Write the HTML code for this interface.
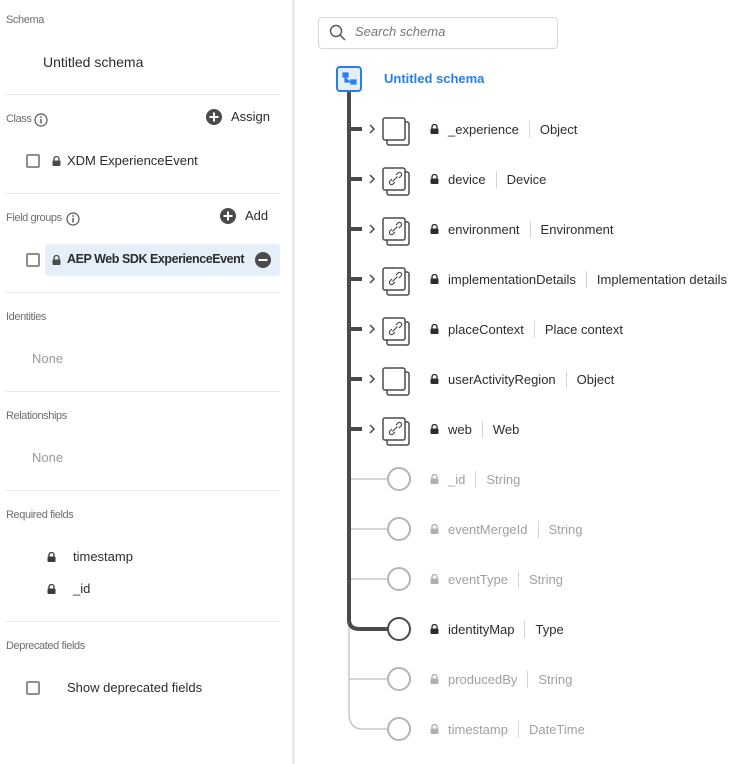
<!DOCTYPE html>
<html><head><meta charset="utf-8"><style>
*{margin:0;padding:0;box-sizing:border-box}
body{width:746px;height:764px;background:#fff;font-family:"Liberation Sans",sans-serif;position:relative;overflow:hidden;color:#2c2c2c}
.a{position:absolute;white-space:nowrap}
.lbl{font-size:11px;color:#6e6e6e;letter-spacing:-0.4px}
.hr{position:absolute;left:6px;width:274px;height:1px;background:#e6e6e6}
.cb{position:absolute;width:14px;height:14px;border:2px solid #8e8e8e;border-radius:2px;background:#fff}
.t{font-size:13px}
.row{position:absolute;left:430px;display:flex;align-items:center;font-size:13px;color:#2c2c2c;height:20px}
.row .s{width:1px;height:17px;background:#d5d5d5;margin:0 10px}
.row.l{color:#a0a0a0}
.row svg{margin-right:9px}
</style></head><body>
<div style="position:absolute;left:292px;top:0;width:3px;height:764px;background:#ececec"></div>

<div class="a lbl" style="left:6px;top:14px">Schema</div>
<div class="a" style="left:43px;top:54px;font-size:14px">Untitled schema</div>
<div class="hr" style="top:94px"></div>

<div class="a lbl" style="left:6px;top:113px">Class</div>
<svg class="a" style="left:34px;top:113px" width="14" height="14"><circle cx="7" cy="7" r="6" fill="none" stroke="#555" stroke-width="1.2"/><rect x="6.3" y="6" width="1.4" height="4.5" fill="#555"/><circle cx="7" cy="4" r=".9" fill="#555"/></svg>
<svg class="a" style="left:206px;top:109px" width="16" height="16"><circle cx="8" cy="8" r="8" fill="#4b4b4b"/><rect x="7" y="3.5" width="2" height="9" fill="#fff"/><rect x="3.5" y="7" width="9" height="2" fill="#fff"/></svg>
<div class="a t" style="left:231px;top:109px">Assign</div>
<div class="cb" style="left:26px;top:154px"></div>
<svg class="a" style="left:52px;top:156px" width="9" height="10"><path d="M2 4.5V3a2.5 2.5 0 0 1 5 0v1.5" fill="none" stroke="#4b4b4b" stroke-width="1.3"/><rect x="0.5" y="4.5" width="8" height="5.5" rx="1" fill="#4b4b4b"/></svg>
<div class="a t" style="left:67px;top:153px">XDM ExperienceEvent</div>
<div class="hr" style="top:193px"></div>

<div class="a lbl" style="left:6px;top:212px">Field groups</div>
<svg class="a" style="left:66px;top:212px" width="14" height="14"><circle cx="7" cy="7" r="6" fill="none" stroke="#555" stroke-width="1.2"/><rect x="6.3" y="6" width="1.4" height="4.5" fill="#555"/><circle cx="7" cy="4" r=".9" fill="#555"/></svg>
<svg class="a" style="left:220px;top:208px" width="16" height="16"><circle cx="8" cy="8" r="8" fill="#4b4b4b"/><rect x="7" y="3.5" width="2" height="9" fill="#fff"/><rect x="3.5" y="7" width="9" height="2" fill="#fff"/></svg>
<div class="a t" style="left:245px;top:208px">Add</div>
<div class="cb" style="left:26px;top:253px"></div>
<div class="a" style="left:45px;top:244px;width:235px;height:32px;background:#e5effa;border-radius:3px"></div>
<svg class="a" style="left:52px;top:255px" width="9" height="10"><path d="M2 4.5V3a2.5 2.5 0 0 1 5 0v1.5" fill="none" stroke="#4b4b4b" stroke-width="1.3"/><rect x="0.5" y="4.5" width="8" height="5.5" rx="1" fill="#4b4b4b"/></svg>
<div class="a" style="left:67px;top:252px;font-size:12.5px;font-weight:bold;letter-spacing:-0.45px">AEP Web SDK ExperienceEvent</div>
<svg class="a" style="left:255px;top:252px" width="16" height="16"><circle cx="8" cy="8" r="8" fill="#4b4b4b"/><rect x="3.5" y="7" width="9" height="2" fill="#fff"/></svg>
<div class="hr" style="top:292px"></div>

<div class="a lbl" style="left:6px;top:311px">Identities</div>
<div class="a t" style="left:32px;top:351px;color:#9a9a9a">None</div>
<div class="hr" style="top:391px"></div>
<div class="a lbl" style="left:6px;top:410px">Relationships</div>
<div class="a t" style="left:32px;top:450px;color:#9a9a9a">None</div>
<div class="hr" style="top:490px"></div>
<div class="a lbl" style="left:6px;top:509px">Required fields</div>
<svg class="a" style="left:47px;top:552px" width="9" height="10"><path d="M2 4.5V3a2.5 2.5 0 0 1 5 0v1.5" fill="none" stroke="#3a3a3a" stroke-width="1.3"/><rect x="0.5" y="4.5" width="8" height="5.5" rx="1" fill="#3a3a3a"/></svg>
<div class="a t" style="left:73px;top:549px">timestamp</div>
<svg class="a" style="left:47px;top:584px" width="9" height="10"><path d="M2 4.5V3a2.5 2.5 0 0 1 5 0v1.5" fill="none" stroke="#3a3a3a" stroke-width="1.3"/><rect x="0.5" y="4.5" width="8" height="5.5" rx="1" fill="#3a3a3a"/></svg>
<div class="a t" style="left:73px;top:581px">_id</div>
<div class="hr" style="top:621px"></div>
<div class="a lbl" style="left:6px;top:640px">Deprecated fields</div>
<div class="cb" style="left:26px;top:681px"></div>
<div class="a t" style="left:67px;top:680px">Show deprecated fields</div>

<div class="a" style="left:318px;top:17px;width:240px;height:32px;border:1px solid #d8d8d8;border-radius:4px"></div>
<svg class="a" style="left:329px;top:24px" width="18" height="18"><circle cx="7" cy="7" r="5.5" fill="none" stroke="#555" stroke-width="1.4"/><path d="M11 11l5 5" stroke="#555" stroke-width="1.5"/></svg>
<div class="a" style="left:355px;top:24px;font-size:13px;font-style:italic;color:#777">Search schema</div>

<svg class="a" style="left:0;top:0" width="746" height="764">
<g fill="none">
<path d="M349 712 Q349 729 362 729 H388" stroke="#c8c8c8" stroke-width="1.5"/>
<path d="M349 620 V712" stroke="#c8c8c8" stroke-width="1.5"/>
<path d="M349 479H388M349 529H388M349 579H388M349 679H388" stroke="#c8c8c8" stroke-width="1.5"/>
<path d="M349 92 V620 Q349 629 360 629 H388" stroke="#4b4b4b" stroke-width="4"/>
<path d="M349 129h13M349 179h13M349 229h13M349 279h13M349 329h13M349 379h13M349 429h13" stroke="#4b4b4b" stroke-width="4"/>
</g>
<g fill="none" stroke="#4b4b4b" stroke-width="1.5">
<path d="M370 125l4 4-4 4M370 175l4 4-4 4M370 225l4 4-4 4M370 275l4 4-4 4M370 325l4 4-4 4M370 375l4 4-4 4M370 425l4 4-4 4"/>
</g>
<rect x="337" y="67" width="24" height="24" rx="3" fill="#e5effa" stroke="#2680eb" stroke-width="2"/>
<path d="M343 73h5v4h-5zM351 80h5v4h-5zM345 77v5h6" fill="#2680eb" stroke="#2680eb" stroke-width="1.2"/>
<g stroke="#4b4b4b" stroke-width="1.5" fill="#fff">
<rect x="387" y="122" width="22" height="23" rx="2"/><rect x="383" y="118" width="22" height="22" rx="2"/>
<rect x="387" y="172" width="22" height="23" rx="2"/><rect x="383" y="168" width="22" height="22" rx="2"/>
<rect x="387" y="222" width="22" height="23" rx="2"/><rect x="383" y="218" width="22" height="22" rx="2"/>
<rect x="387" y="272" width="22" height="23" rx="2"/><rect x="383" y="268" width="22" height="22" rx="2"/>
<rect x="387" y="322" width="22" height="23" rx="2"/><rect x="383" y="318" width="22" height="22" rx="2"/>
<rect x="387" y="372" width="22" height="23" rx="2"/><rect x="383" y="368" width="22" height="22" rx="2"/>
<rect x="387" y="422" width="22" height="23" rx="2"/><rect x="383" y="418" width="22" height="22" rx="2"/>
</g>
<g fill="none" stroke="#4b4b4b" stroke-width="1.2">
<path d="M396 177l2-2a2 2 0 0 1 3 3l-2 2M392 181l-2 2a2 2 0 0 0 3 3l2-2M392.5 183.5l5-5" transform="translate(0,-2)"/>
<path d="M396 227l2-2a2 2 0 0 1 3 3l-2 2M392 231l-2 2a2 2 0 0 0 3 3l2-2M392.5 233.5l5-5" transform="translate(0,-2)"/>
<path d="M396 277l2-2a2 2 0 0 1 3 3l-2 2M392 281l-2 2a2 2 0 0 0 3 3l2-2M392.5 283.5l5-5" transform="translate(0,-2)"/>
<path d="M396 327l2-2a2 2 0 0 1 3 3l-2 2M392 331l-2 2a2 2 0 0 0 3 3l2-2M392.5 333.5l5-5" transform="translate(0,-2)"/>
<path d="M396 427l2-2a2 2 0 0 1 3 3l-2 2M392 431l-2 2a2 2 0 0 0 3 3l2-2M392.5 433.5l5-5" transform="translate(0,-2)"/>
</g>
<g fill="#fff" stroke="#b5b5b5" stroke-width="2">
<circle cx="399" cy="479" r="11"/><circle cx="399" cy="529" r="11"/><circle cx="399" cy="579" r="11"/><circle cx="399" cy="679" r="11"/><circle cx="399" cy="729" r="11"/>
</g>
<circle cx="399" cy="629" r="11" fill="#fff" stroke="#4b4b4b" stroke-width="2"/>
</svg>
<div class="a" style="left:384px;top:71px;font-size:13px;font-weight:bold;color:#2680eb">Untitled schema</div>

<div class="row" style="top:119px"><svg width="9" height="10"><path d="M2 4.5V3a2.5 2.5 0 0 1 5 0v1.5" fill="none" stroke="#2c2c2c" stroke-width="1.3"/><rect x="0.5" y="4.5" width="8" height="5.5" rx="1" fill="#2c2c2c"/></svg>_experience<span class="s"></span>Object</div>
<div class="row" style="top:169px"><svg width="9" height="10"><path d="M2 4.5V3a2.5 2.5 0 0 1 5 0v1.5" fill="none" stroke="#2c2c2c" stroke-width="1.3"/><rect x="0.5" y="4.5" width="8" height="5.5" rx="1" fill="#2c2c2c"/></svg>device<span class="s"></span>Device</div>
<div class="row" style="top:219px"><svg width="9" height="10"><path d="M2 4.5V3a2.5 2.5 0 0 1 5 0v1.5" fill="none" stroke="#2c2c2c" stroke-width="1.3"/><rect x="0.5" y="4.5" width="8" height="5.5" rx="1" fill="#2c2c2c"/></svg>environment<span class="s"></span>Environment</div>
<div class="row" style="top:269px"><svg width="9" height="10"><path d="M2 4.5V3a2.5 2.5 0 0 1 5 0v1.5" fill="none" stroke="#2c2c2c" stroke-width="1.3"/><rect x="0.5" y="4.5" width="8" height="5.5" rx="1" fill="#2c2c2c"/></svg>implementationDetails<span class="s"></span>Implementation details</div>
<div class="row" style="top:319px"><svg width="9" height="10"><path d="M2 4.5V3a2.5 2.5 0 0 1 5 0v1.5" fill="none" stroke="#2c2c2c" stroke-width="1.3"/><rect x="0.5" y="4.5" width="8" height="5.5" rx="1" fill="#2c2c2c"/></svg>placeContext<span class="s"></span>Place context</div>
<div class="row" style="top:369px"><svg width="9" height="10"><path d="M2 4.5V3a2.5 2.5 0 0 1 5 0v1.5" fill="none" stroke="#2c2c2c" stroke-width="1.3"/><rect x="0.5" y="4.5" width="8" height="5.5" rx="1" fill="#2c2c2c"/></svg>userActivityRegion<span class="s"></span>Object</div>
<div class="row" style="top:419px"><svg width="9" height="10"><path d="M2 4.5V3a2.5 2.5 0 0 1 5 0v1.5" fill="none" stroke="#2c2c2c" stroke-width="1.3"/><rect x="0.5" y="4.5" width="8" height="5.5" rx="1" fill="#2c2c2c"/></svg>web<span class="s"></span>Web</div>
<div class="row l" style="top:469px"><svg width="9" height="10"><path d="M2 4.5V3a2.5 2.5 0 0 1 5 0v1.5" fill="none" stroke="#b0b0b0" stroke-width="1.3"/><rect x="0.5" y="4.5" width="8" height="5.5" rx="1" fill="#b0b0b0"/></svg>_id<span class="s"></span>String</div>
<div class="row l" style="top:519px"><svg width="9" height="10"><path d="M2 4.5V3a2.5 2.5 0 0 1 5 0v1.5" fill="none" stroke="#b0b0b0" stroke-width="1.3"/><rect x="0.5" y="4.5" width="8" height="5.5" rx="1" fill="#b0b0b0"/></svg>eventMergeId<span class="s"></span>String</div>
<div class="row l" style="top:569px"><svg width="9" height="10"><path d="M2 4.5V3a2.5 2.5 0 0 1 5 0v1.5" fill="none" stroke="#b0b0b0" stroke-width="1.3"/><rect x="0.5" y="4.5" width="8" height="5.5" rx="1" fill="#b0b0b0"/></svg>eventType<span class="s"></span>String</div>
<div class="row" style="top:619px"><svg width="9" height="10"><path d="M2 4.5V3a2.5 2.5 0 0 1 5 0v1.5" fill="none" stroke="#2c2c2c" stroke-width="1.3"/><rect x="0.5" y="4.5" width="8" height="5.5" rx="1" fill="#2c2c2c"/></svg>identityMap<span class="s"></span>Type</div>
<div class="row l" style="top:669px"><svg width="9" height="10"><path d="M2 4.5V3a2.5 2.5 0 0 1 5 0v1.5" fill="none" stroke="#b0b0b0" stroke-width="1.3"/><rect x="0.5" y="4.5" width="8" height="5.5" rx="1" fill="#b0b0b0"/></svg>producedBy<span class="s"></span>String</div>
<div class="row l" style="top:719px"><svg width="9" height="10"><path d="M2 4.5V3a2.5 2.5 0 0 1 5 0v1.5" fill="none" stroke="#b0b0b0" stroke-width="1.3"/><rect x="0.5" y="4.5" width="8" height="5.5" rx="1" fill="#b0b0b0"/></svg>timestamp<span class="s"></span>DateTime</div>
</body></html>
